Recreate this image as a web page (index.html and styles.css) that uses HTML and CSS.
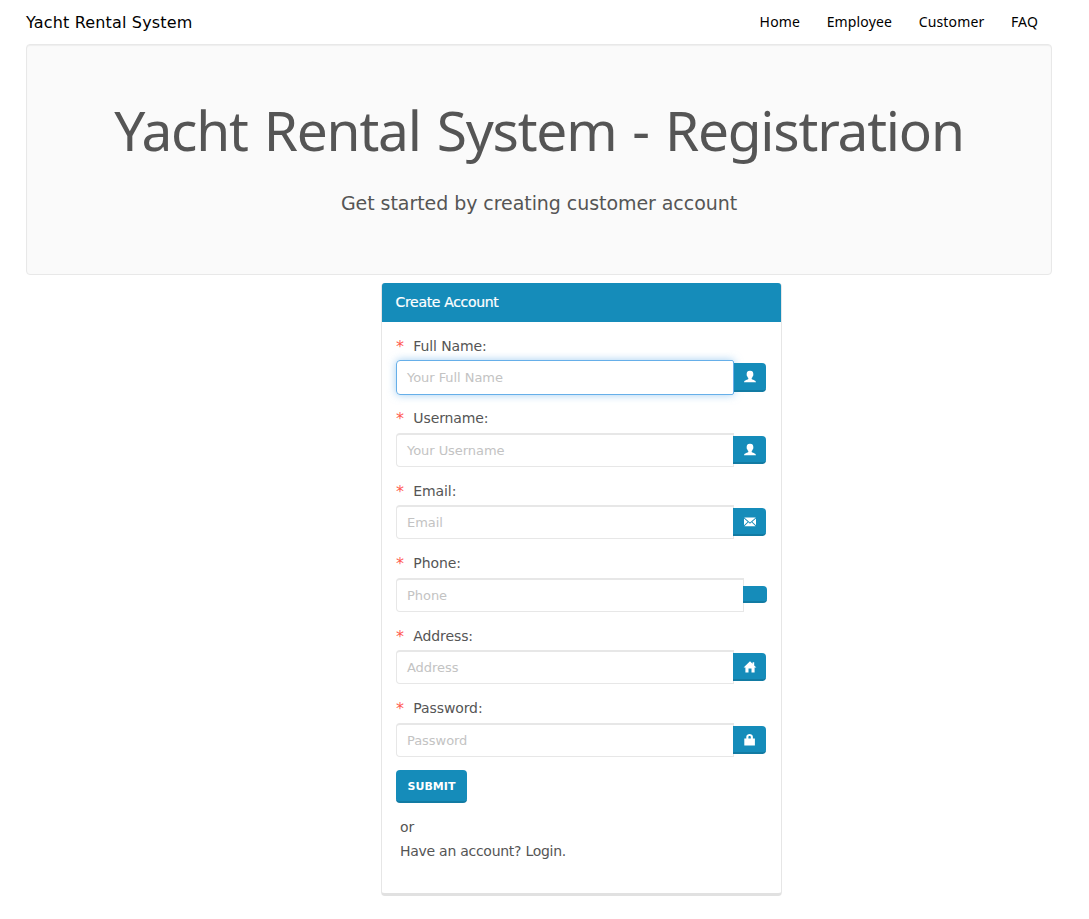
FILE: index.html
```html
<!DOCTYPE html>
<html lang="en">
<head>
<meta charset="utf-8">
<title>Yacht Rental System</title>
<link rel="stylesheet" href="styles.css">
</head>
<body>
<svg class="sprite" aria-hidden="true">
  <symbol id="user" viewBox="0 0 14 14"><path d="M7 .8C4.300 .8 3.500 2.500 3.700 4.500C3.500 4.700 3.700 5.800 4.100 6C4.300 7 4.800 7.700 5.300 8.100V9.100C5 9.900 1.300 10 1 12.300H13C12.700 10 9 9.900 8.700 9.100V8.100C9.200 7.700 9.700 7 9.900 6C10.300 5.800 10.500 4.700 10.300 4.500C10.500 2.500 9.700 .8 7 .8Z"/></symbol>
  <symbol id="mail" viewBox="0 0 14 14"><path d="M1.200 2.500H12.800L7 7.600ZM1 3.400L4.700 6.700L1 10.300ZM13 3.400L9.300 6.700L13 10.300ZM5.400 7.300L7 8.700L8.600 7.300L12.600 11.300H1.400Z"/></symbol>
  <symbol id="home" viewBox="0 0 14 14"><path d="M7 1.300L9.600 3.800V2.300H11.200V5.400L13.400 7.600H11.600V12.600H8.500V8.600H5.500V12.600H2.400V7.600H.6Z"/></symbol>
  <symbol id="lock" viewBox="0 0 14 14"><path fill-rule="evenodd" d="M1.300 5.500H3.300V3.800C3.300 .2 9.900 .2 9.900 3.800V5.500H11.900V12.500H1.300ZM5.400 5.500H7.800V3.900C7.800 2.600 5.400 2.600 5.400 3.900Z"/></symbol>
</svg>
<div class="page">
  <header class="topbar">
    <a class="brand">Yacht Rental System</a>
    <nav class="nav"><a>Home</a><a>Employee</a><a>Customer</a><a>FAQ</a></nav>
  </header>
  <section class="hero">
    <h1>Yacht Rental System - Registration</h1>
    <p>Get started by creating customer account</p>
  </section>
  <main class="panel">
    <h2 class="panel-heading">Create Account</h2>
    <form class="panel-body">
      <div class="field"><label><i>*</i>Full Name:</label><div class="group"><div class="input focused">Your Full Name</div><div class="addon"><svg><use href="#user"/></svg></div></div></div>
      <div class="field"><label><i>*</i>Username:</label><div class="group"><div class="input">Your Username</div><div class="addon"><svg><use href="#user"/></svg></div></div></div>
      <div class="field"><label><i>*</i>Email:</label><div class="group"><div class="input">Email</div><div class="addon"><svg><use href="#mail"/></svg></div></div></div>
      <div class="field"><label><i>*</i>Phone:</label><div class="group wide"><div class="input">Phone</div><div class="addon empty"></div></div></div>
      <div class="field"><label><i>*</i>Address:</label><div class="group"><div class="input">Address</div><div class="addon"><svg><use href="#home"/></svg></div></div></div>
      <div class="field"><label><i>*</i>Password:</label><div class="group"><div class="input">Password</div><div class="addon"><svg><use href="#lock"/></svg></div></div></div>
      <button class="submit" type="button">SUBMIT</button>
      <div class="alt"><div>or</div><div class="login">Have an account? Login.</div></div>
    </form>
  </main>
</div>
</body>
</html>
```

FILE: styles.css
```css
* { box-sizing: border-box; }
body {
  margin: 0;
  background: #fff;
  color: #555;
  font: 14px/20px "DejaVu Sans", Verdana, sans-serif;
}
.sprite { display: none; }
.page { padding: 0 37px 0 26px; }
.topbar {
  height: 44px;
  display: flex;
  justify-content: space-between;
  align-items: center;
  color: #000;
}
.brand { padding-top: 1px; font-size: 16px; letter-spacing: .17px; }
.nav {
  display: flex;
  gap: 26.600px;
  padding-right: 14px;
  font-family: "Noto Sans", sans-serif;
  font-size: 14px;
  letter-spacing: .15px;
}
.hero {
  height: 231px;
  padding: 52px 0 0;
  text-align: center;
  background: #fafafa;
  border: 1px solid #e8e8e8;
  border-radius: 4px;
  box-shadow: inset 0 1px 1px rgba(0, 0, 0, .05);
}
.hero h1 {
  margin: 0;
  font: 400 55px/66px "Noto Sans", sans-serif;
  letter-spacing: -1.200px;
  word-spacing: 2.900px;
}
.hero p { margin: 26px 0 0; font-size: 19px; line-height: 28px; letter-spacing: -.06px; }
.panel {
  width: 401px;
  height: 613px;
  margin: 8px 0 0 355px;
  border: 1px solid #e6e6e6;
  border-bottom: 3px solid #e1e1e1;
  border-radius: 4px;
}
.panel-heading {
  height: 39px;
  margin: -1px 0 0;
  padding: 0 13.500px;
  font-size: 14px;
  font-weight: 400;
  line-height: 39px;
  letter-spacing: -.32px;
  color: #fff;
  -webkit-text-stroke: .2px #fff;
  background: #158cba;
  border-radius: 3px 3px 0 0;
}
.panel-body { padding: 13.900px 14px 0; }
.field { height: 72.500px; }
.field label { display: flex; height: 24px; line-height: 20px; letter-spacing: -.1px; }
.field i { width: 17.300px; font-size: 16px; font-style: normal; line-height: 22px; color: #ff5a52; }
.group { display: flex; align-items: center; height: 35px; padding-right: 1px; }
.group.wide { padding-right: 0; }
.input {
  flex: 1;
  height: 34px;
  margin-right: -1px;
  padding: 0 10px;
  font-size: 13px;
  line-height: 32px;
  letter-spacing: -.05px;
  color: #c3c3c3;
  border: 1px solid #e7e7e7;
  border-top-width: 2px;
  border-radius: 4px 0 0 4px;
}
.wide .input { margin-right: -1px; }
.input.focused {
  position: relative;
  height: 35px;
  line-height: 34px;
  margin-right: 0;
  border: 1px solid #66afe9;
  border-radius: 4px 2px 2px 4px;
  box-shadow: 0 0 8px rgba(102, 175, 233, .6);
}
.focused + .addon { width: 32px; height: 29px; margin-bottom: 0; padding-left: 9px; }
.addon {
  position: relative;
  width: 33px;
  height: 28px;
  margin-bottom: .6px;
  padding: 7px 0 0 10px;
  background: #158cba;
  border-bottom: 2px solid #127ba3;
  border-radius: 0 4px 4px 0;
}
.addon svg { display: block; width: 14px; height: 14px; fill: #fff; }
.addon.empty { width: 24px; height: 17px; }
.submit {
  display: block;
  width: 71px;
  height: 33px;
  margin-top: -.7px;
  padding: 2px 0 0;
  font: 700 11px/29px "DejaVu Sans", sans-serif;
  color: #fff;
  background: #158cba;
  border: 0;
  border-bottom: 2px solid #127ba3;
  border-radius: 4px;
}
.alt { padding: 12px 0 0 4px; line-height: 24px; }
.login { letter-spacing: -.27px; }
```
